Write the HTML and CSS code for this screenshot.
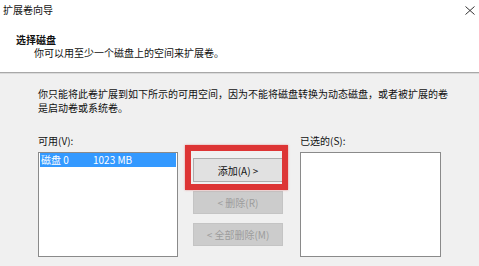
FILE: index.html
```html
<!DOCTYPE html>
<html>
<head>
    <meta charset="utf-8">
    <title>扩展卷向导</title>
    <link rel="stylesheet" href="styles.css">
</head>
<body>
    <div class="wizard">
        <div class="titlebar">
            <span class="title">扩展卷向导</span>
            <svg class="close" width="10" height="9" viewBox="0 0 10 9">
                <path d="M0.5 0.5 L9.5 8.5 M9.5 0.5 L0.5 8.5" stroke="#333" stroke-width="1" fill="none"/>
            </svg>
        </div>

        <div class="header">
            <div class="heading">选择磁盘</div>
            <div class="subheading">你可以用至少一个磁盘上的空间来扩展卷。</div>
        </div>

        <div class="content">
            <p class="note">你只能将此卷扩展到如下所示的可用空间，因为不能将磁盘转换为动态磁盘，或者被扩展的卷<br>是启动卷或系统卷。</p>

            <div class="picker">
                <div class="column">
                    <div class="label">可用(V):</div>
                    <div class="listbox">
                        <div class="item selected">
                            <span class="disk">磁盘 0</span>
                            <span class="size">1023 MB</span>
                        </div>
                    </div>
                </div>

                <div class="actions">
                    <div class="add-wrap">
                        <button class="btn">添加(A) &gt;</button>
                        <div class="highlight"></div>
                    </div>
                    <button class="btn" disabled>&lt; 删除(R)</button>
                    <button class="btn" disabled>&lt; 全部删除(M)</button>
                </div>

                <div class="column right">
                    <div class="label">已选的(S):</div>
                    <div class="listbox"></div>
                </div>
            </div>
        </div>
    </div>
</body>
</html>
```

FILE: styles.css
```css
* {
    box-sizing: border-box;
}

body {
    margin: 0;
    font-family: "Noto Sans CJK SC", "Noto Sans", sans-serif;
    font-size: 10px;
    color: #111;
}

.wizard {
    width: 479px;
    height: 266px;
    overflow: hidden;
    background: #f0f0f0;
}

.titlebar {
    height: 20px;
    display: flex;
    align-items: center;
    justify-content: space-between;
    padding: 0 4px 0 3px;
    background: #fff;
}

.title {
    line-height: 20px;
}

.header {
    height: 53px;
    padding-top: 13px;
    background: #fff;
    border-bottom: 1px solid #a8a8a8;
    box-shadow: 0 1px 0 #dadada;
    line-height: 13px;
}

.heading {
    padding-left: 16px;
    font-weight: bold;
}

.subheading {
    padding-left: 34px;
}

.content {
    padding: 14px 0 0 38px;
}

.note {
    margin: 0;
    line-height: 14px;
}

.picker {
    display: flex;
    margin-top: 19px;
}

.column {
    width: 140px;
}

.column.right {
    width: 141px;
    margin-left: 17px;
}

.label {
    line-height: 13px;
    margin-bottom: 5px;
}

.listbox {
    height: 105px;
    background: #fff;
    border: 1px solid #8a8a8a;
    padding: 0 1px;
}

.item {
    height: 14px;
    line-height: 14px;
    display: flex;
    padding-left: 1px;
}

.item.selected {
    background: #3399ff;
    color: #fff;
}

.item .disk {
    width: 52px;
}

.actions {
    width: 90px;
    margin-left: 15px;
    padding-top: 24px;
    display: flex;
    flex-direction: column;
    gap: 9px;
}

.add-wrap {
    position: relative;
}

.btn {
    width: 90px;
    height: 24px;
    padding: 0;
    font-family: inherit;
    font-size: 10px;
    color: #111;
    background: #e1e1e1;
    border: 1px solid #adadad;
}

.btn:disabled {
    height: 23px;
    color: #9c9c9c;
    background: #cccccc;
    border-color: #c4c4c4;
}

.highlight {
    position: absolute;
    left: -8px;
    right: -5px;
    top: -13px;
    bottom: -8px;
    border: 6px solid #dd3535;
    box-shadow: 0 0 2px rgba(221, 53, 53, 0.5);
}
```
